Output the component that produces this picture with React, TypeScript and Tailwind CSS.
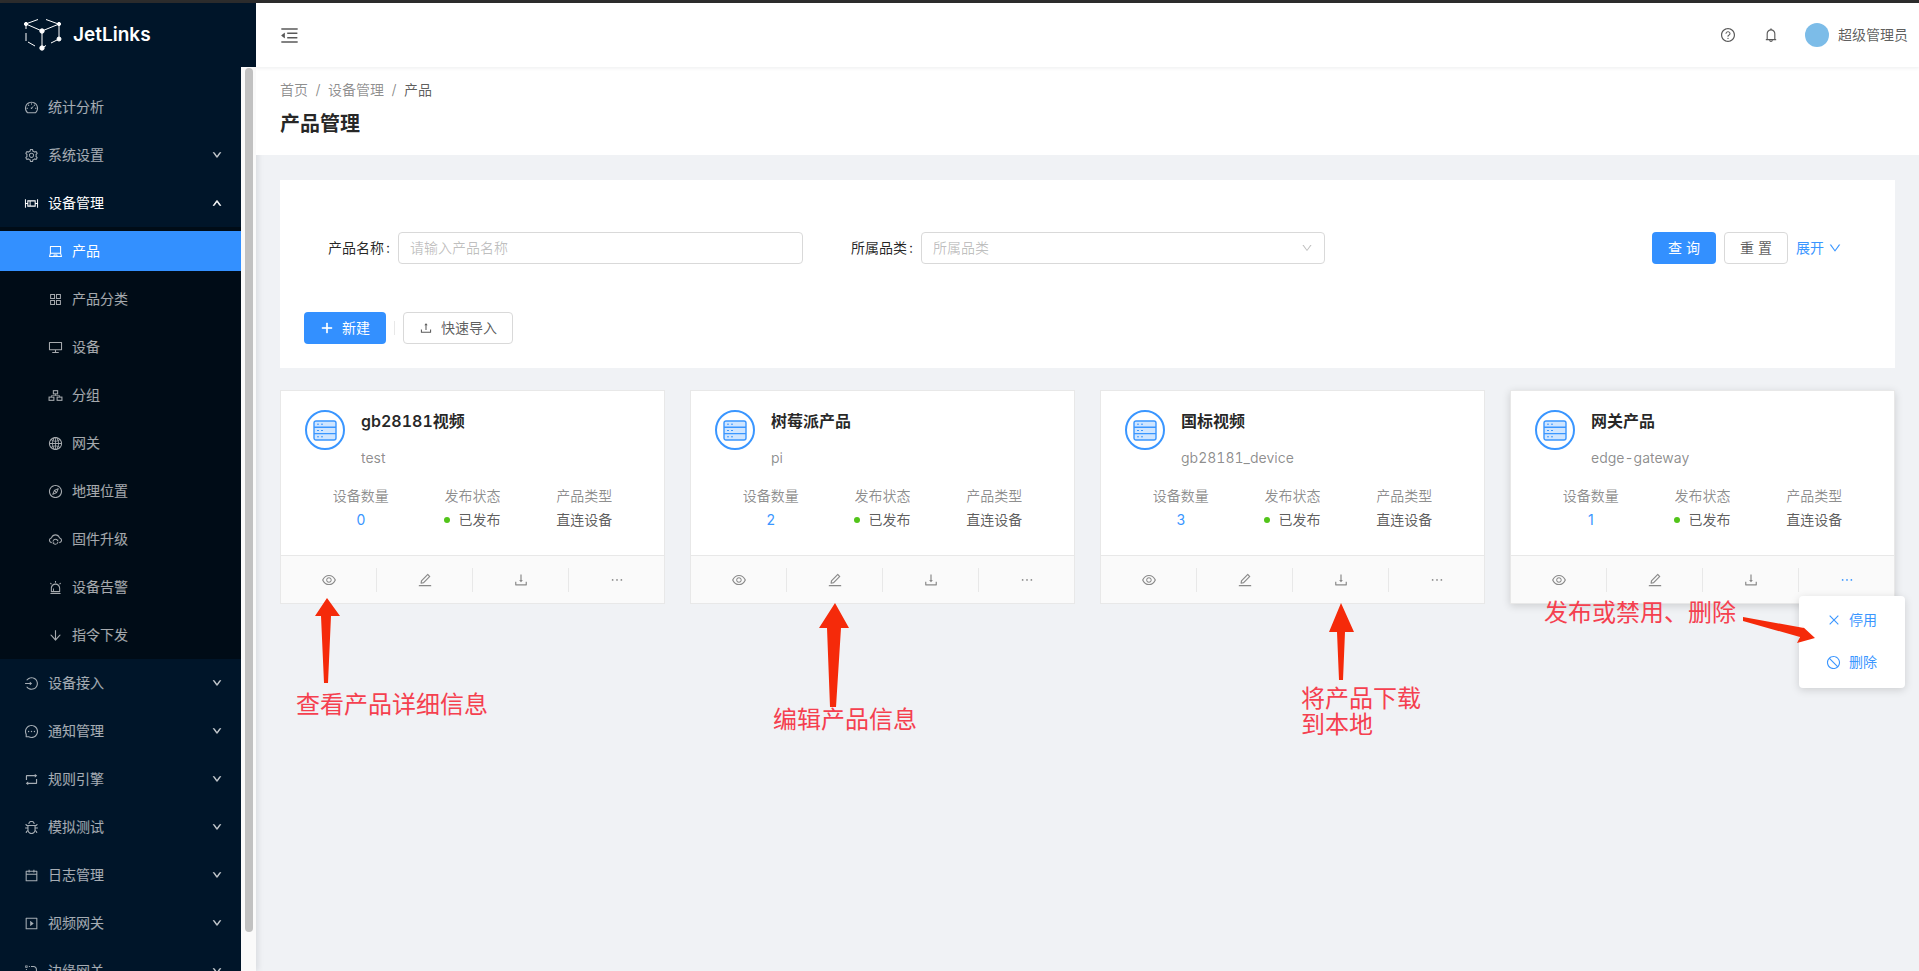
import React from 'react';
import {
  AiOutlineDashboard, AiOutlineSetting, AiOutlineBoxPlot, AiOutlineLaptop, AiOutlineAppstore, AiOutlineDesktop,
  AiOutlineGlobal, AiOutlineCompass, AiOutlineCloudSync, AiOutlineAlert, AiOutlineArrowDown,
  AiOutlineLogin, AiOutlineMessage, AiOutlineRetweet, AiOutlineBug, AiOutlineCalendar, AiOutlinePlaySquare,
  AiOutlineRadiusSetting, AiOutlineDown, AiOutlineUp, AiOutlineMenuFold, AiOutlineQuestionCircle, AiOutlineBell,
  AiOutlinePlus, AiOutlineUpload, AiOutlineEye, AiOutlineEdit, AiOutlineDownload, AiOutlineEllipsis,
  AiOutlineClose, AiOutlineStop,
} from 'react-icons/ai';

// three small boxes, the group icon of the menu
const GroupIcon = ({ className }: { className?: string }) => (
  <svg viewBox="0 0 14 14" className={className} fill="none" stroke="currentColor" strokeWidth="1">
    <rect x="5" y="2.5" width="4" height="3" />
    <rect x="1" y="8.5" width="4.5" height="3" />
    <rect x="8.5" y="8.5" width="4.5" height="3" />
    <path d="M7 5.5v1.5M3.2 8.5V7h7.6v1.5" strokeWidth="0.6" />
  </svg>
);

const topBefore = [
  { label: '统计分析', icon: AiOutlineDashboard, arrow: false },
  { label: '系统设置', icon: AiOutlineSetting, arrow: true },
];
const subItems = [
  { label: '产品', icon: AiOutlineLaptop, active: true },
  { label: '产品分类', icon: AiOutlineAppstore },
  { label: '设备', icon: AiOutlineDesktop },
  { label: '分组', icon: GroupIcon },
  { label: '网关', icon: AiOutlineGlobal },
  { label: '地理位置', icon: AiOutlineCompass },
  { label: '固件升级', icon: AiOutlineCloudSync },
  { label: '设备告警', icon: AiOutlineAlert },
  { label: '指令下发', icon: AiOutlineArrowDown },
];
const topAfter = [
  { label: '设备接入', icon: AiOutlineLogin, arrow: true },
  { label: '通知管理', icon: AiOutlineMessage, arrow: true },
  { label: '规则引擎', icon: AiOutlineRetweet, arrow: true },
  { label: '模拟测试', icon: AiOutlineBug, arrow: true },
  { label: '日志管理', icon: AiOutlineCalendar, arrow: true },
  { label: '视频网关', icon: AiOutlinePlaySquare, arrow: true },
  { label: '边缘网关', icon: AiOutlineRadiusSetting, arrow: true },
];
const products = [
  { name: 'gb28181视频', id: 'test', count: 0 },
  { name: '树莓派产品', id: 'pi', count: 2 },
  { name: '国标视频', id: 'gb28181_device', count: 3 },
  { name: '网关产品', id: 'edge-gateway', count: 1, open: true },
];

const TopItem = ({ item }: { item: { label: string; icon: any; arrow: boolean } }) => (
  <div className="h-12 flex items-center pl-6 pr-[19px] text-white/65 shrink-0">
    <item.icon className="w-[15px] h-[15px] mr-[9px]" />
    <span className="flex-1">{item.label}</span>
    {item.arrow && <AiOutlineDown className="w-[10px] h-[10px] stroke-[90]" />}
  </div>
);

const Logo = () => (
  <svg viewBox="0 0 38 34" className="w-[38px] h-[34px]" fill="white" stroke="white">
    <path d="M3 5.5l11-4M22 1.5l11 4M2 6l16 7M18 13l17-7M18 13v17M35 6v15M2 6v5M2 15v8M35 21l-8 4M22 27.5l-4 2.5M4 24l7 4" strokeWidth="1" fill="none" />
    <circle cx="2" cy="6" r="1.6" />
    <circle cx="18" cy="13" r="2.2" />
    <circle cx="35" cy="6" r="1.6" />
    <circle cx="35" cy="21" r="2" />
    <circle cx="18" cy="30" r="2.2" />
  </svg>
);

const ProductIcon = () => (
  <div className="w-10 h-10 rounded-full border-2 border-[#3a96ff] flex items-center justify-center shrink-0">
    <svg viewBox="0 0 24 21" className="w-6 h-[21px]">
      <rect x="1" y="1" width="22" height="19" rx="2" fill="#cfe5ff" stroke="#3a96ff" strokeWidth="1.4" />
      <path d="M1 7.3h22M1 13.6h22" stroke="#3a96ff" strokeWidth="1.4" />
      <path d="M4 4.2h2M8 4.2h2M4 10.5h2M8 10.5h2M4 16.8h2M8 16.8h2" stroke="#3a96ff" strokeWidth="1" />
    </svg>
  </div>
);

const ProductCard = ({ p }: { p: (typeof products)[number] }) => (
  <div className={`flex-1 h-[214px] bg-white border border-[#e8e8e8] flex flex-col ${p.open ? 'shadow-[0_2px_8px_rgba(0,0,0,0.15)]' : ''}`}>
    <div className="flex-1 pt-[19px] pl-6 pr-6">
      <div className="flex gap-4">
        <ProductIcon />
        <div>
          <div className="text-base font-semibold text-black/85 leading-6 -mt-px tabular-nums">{p.name}</div>
          <div className="text-sm text-black/45 leading-[22px] mt-[14px] tabular-nums">{p.id}</div>
        </div>
      </div>
      <div className="grid grid-cols-3 mt-4 text-center text-sm leading-[22px]">
        <div>
          <div className="text-black/45">设备数量</div>
          <div className="text-[#3a96ff] mt-[2px]">{p.count}</div>
        </div>
        <div>
          <div className="text-black/45">发布状态</div>
          <div className="text-black/65 mt-[2px] flex items-center justify-center gap-2">
            <span className="w-[6px] h-[6px] rounded-full bg-[#52c41a]" />
            已发布
          </div>
        </div>
        <div>
          <div className="text-black/45">产品类型</div>
          <div className="text-black/65 mt-[2px]">直连设备</div>
        </div>
      </div>
    </div>
    <div className="h-[48px] bg-[#fafafa] border-t border-[#e8e8e8] flex items-center text-black/45">
      <div className="flex-1 h-6 flex items-center justify-center border-r border-[#e8e8e8]"><AiOutlineEye className="w-4 h-4" /></div>
      <div className="flex-1 h-6 flex items-center justify-center border-r border-[#e8e8e8]"><AiOutlineEdit className="w-4 h-4" /></div>
      <div className="flex-1 h-6 flex items-center justify-center border-r border-[#e8e8e8]"><AiOutlineDownload className="w-4 h-4" /></div>
      <div className={`flex-1 h-6 flex items-center justify-center ${p.open ? 'text-[#3a96ff]' : ''}`}><AiOutlineEllipsis className="w-4 h-4" /></div>
    </div>
  </div>
);

const Annotation = ({ className, children }: { className: string; children: React.ReactNode }) => (
  <div className={`absolute text-2xl leading-[26px] text-[#f5404f] ${className}`}>{children}</div>
);

export default function App() {
  return (
    <div className="relative h-[971px] overflow-hidden flex flex-col bg-[#f0f2f5] text-sm" style={{ fontFamily: 'Inter, "Noto Sans CJK SC", sans-serif' }}>
      <div className="h-[3px] bg-[#2d2d2d] shrink-0" />
      <div className="flex flex-1 min-h-0">
        {/* sidebar */}
        <aside className="w-[256px] shrink-0 bg-[#001529] flex flex-col shadow-[2px_0_6px_rgba(0,21,41,0.1)]">
          <div className="h-16 flex items-center pl-6 gap-[11px] shrink-0">
            <Logo />
            <span className="text-white text-[19px] font-semibold">JetLinks</span>
          </div>
          <div className="flex flex-1 min-h-0">
            <nav className="flex-1 overflow-hidden pt-4">
              {topBefore.map((m) => <TopItem key={m.label} item={m} />)}
              <div className="h-12 flex items-center pl-6 pr-[19px] text-white">
                <AiOutlineBoxPlot className="w-[15px] h-[15px] mr-[9px]" />
                <span className="flex-1">设备管理</span>
                <AiOutlineUp className="w-[10px] h-[10px] stroke-[90]" />
              </div>
              <div className="bg-[#000c17]">
                {subItems.map((s) => (
                  <div key={s.label} className="h-12 flex items-center">
                    <div className={`w-full h-10 flex items-center pl-12 ${s.active ? 'bg-[#3390ff] text-white' : 'text-white/65'}`}>
                      <s.icon className="w-[15px] h-[15px] mr-[9px]" />
                      {s.label}
                    </div>
                  </div>
                ))}
              </div>
              {topAfter.map((m) => <TopItem key={m.label} item={m} />)}
            </nav>
            <div className="w-[15px] bg-[#fafafa] px-1 py-[1px] shrink-0">
              <div className="w-[8px] h-[864px] rounded bg-[#c1c1c1]" />
            </div>
          </div>
        </aside>

        <main className="flex-1 min-w-0 flex flex-col">
          <header className="h-16 bg-white shadow-[0_1px_4px_rgba(0,21,41,0.08)] flex items-center pl-6 pr-[11px] shrink-0 relative">
            <AiOutlineMenuFold className="w-[21px] h-[21px] text-black/65 flex-none -ml-px" />
            <div className="flex-1" />
            <AiOutlineQuestionCircle className="w-4 h-4 text-black/65" />
            <AiOutlineBell className="w-4 h-4 text-black/65 ml-[27px]" />
            <div className="w-6 h-6 rounded-full bg-[#7cbce8] ml-[26px] mr-[9px]" />
            <span className="text-black/65">超级管理员</span>
          </header>

          <div className="h-[88px] bg-white px-6 pt-3 shrink-0">
            <div className="text-black/45 leading-[22px] flex gap-[7.5px]">
              <span>首页</span><span>/</span><span>设备管理</span><span>/</span><span className="text-black/65">产品</span>
            </div>
            <div className="text-xl font-semibold text-black/85 leading-8 mt-[7px]">产品管理</div>
          </div>

          <div className="p-6 pt-[25px] flex flex-col gap-[22px]">
            <div className="h-[188px] bg-white px-6 pt-[52px]">
              <div className="flex items-center h-8">
                <span className="w-[70px] ml-[24px] text-black/85 whitespace-nowrap">产品名称<span className="ml-[2px]">:</span></span>
                <div className="w-[405px] h-8 border border-[#d9d9d9] rounded flex items-center px-[11px] text-black/25">请输入产品名称</div>
                <span className="w-[70px] ml-[48px] text-black/85 whitespace-nowrap">所属品类<span className="ml-[2px]">:</span></span>
                <div className="w-[404px] h-8 border border-[#d9d9d9] rounded flex items-center justify-between px-[11px] text-black/25">
                  所属品类
                  <AiOutlineDown className="w-3 h-3" />
                </div>
                <div className="flex-1" />
                <button className="w-16 h-8 rounded bg-[#3390ff] text-white">查 询</button>
                <button className="w-16 h-8 rounded border border-[#d9d9d9] text-black/65 ml-2">重 置</button>
                <span className="text-[#3a96ff] ml-2 flex items-center gap-1 mr-[29px]">展开 <AiOutlineDown className="w-[14px] h-[14px]" /></span>
              </div>
              <div className="flex items-center h-8 mt-[48px]">
                <button className="w-[82px] h-8 rounded bg-[#3390ff] text-white flex items-center justify-center gap-2">
                  <AiOutlinePlus className="w-[14px] h-[14px] stroke-[50]" /> 新建
                </button>
                <span className="w-px h-[14px] bg-[#e8e8e8] mx-2" />
                <button className="w-[110px] h-8 rounded border border-[#d9d9d9] text-black/65 flex items-center justify-center gap-2">
                  <AiOutlineUpload className="w-[14px] h-[14px]" /> 快速导入
                </button>
              </div>
            </div>

            <div className="flex gap-[25px]">
              {products.map((p) => <ProductCard key={p.id} p={p} />)}
            </div>
          </div>
        </main>
      </div>

      {/* dropdown opened from the last card */}
      <div className="absolute left-[1799px] top-[596px] w-[106px] h-[92px] bg-white rounded shadow-[0_2px_8px_rgba(0,0,0,0.15)] text-[#3a96ff] flex flex-col justify-center pb-[2px]">
        <div className="h-[42px] flex items-center pl-[27px] gap-2"><AiOutlineClose className="w-[14px] h-[14px] ml-px" />停用</div>
        <div className="h-[42px] flex items-center pl-[27px] gap-2"><AiOutlineStop className="w-[15px] h-[15px]" />删除</div>
      </div>

      {/* red annotations drawn on top of the screenshot */}
      <svg className="absolute left-0 top-0 w-[1919px] h-[971px] pointer-events-none" viewBox="0 0 1919 971">
        <polygon points="327,598 340,616 331,616 328,683 324,683 321,616 315,616" fill="#f52a0a" />
        <polygon points="835,603 849,628 841,628 836,707 830,707 827,628 819,628" fill="#f52a0a" />
        <polygon points="1341,603 1354,632 1345,632 1343,680 1339,680 1337,632 1329,632" fill="#f52a0a" />
        <polygon points="1743,617 1804,628 1802,626 1815,638 1797,643 1800,637 1743,621" fill="#f52a0a" />
      </svg>
      <Annotation className="left-[296px] top-[692px]">查看产品详细信息</Annotation>
      <Annotation className="left-[773px] top-[707px]">编辑产品信息</Annotation>
      <Annotation className="left-[1301px] top-[686px]">将产品下载<br />到本地</Annotation>
      <Annotation className="left-[1544px] top-[600px]">发布或禁用、删除</Annotation>
    </div>
  );
}
